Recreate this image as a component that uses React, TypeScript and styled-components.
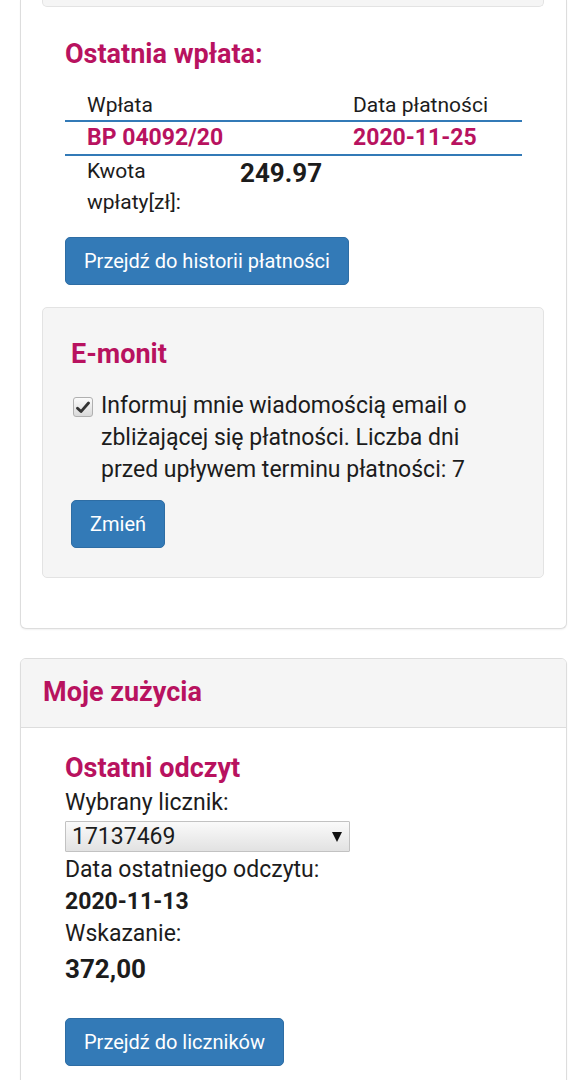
import React from "react";
import styled, { createGlobalStyle } from "styled-components";

const pink = "#b8125f";
const blue = "#337ab7";

const Global = createGlobalStyle`
  html, body { margin: 0; padding: 0; background: #fff; }
  body {
    font-family: Roboto, "Noto Sans", "Liberation Sans", sans-serif;
    color: #1c1c1c;
    font-size: 23px;
    line-height: 32px;
  }
  * { box-sizing: border-box; }
`;

const Page = styled.div`
  padding: 0 18px 0 20px;
  display: flex;
  flex-direction: column;
  gap: 29px;
`;

const Panel = styled.section<{ $cutTop?: boolean }>`
  border: 1px solid #ddd;
  border-top: ${(p) => (p.$cutTop ? "none" : "1px solid #ddd")};
  border-radius: ${(p) => (p.$cutTop ? "0 0 6px 6px" : "6px")};
  background: #fff;
  box-shadow: 0 1px 2px rgba(0, 0, 0, 0.06);
  overflow: hidden;
`;

const PanelHeading = styled.header`
  background: #f5f5f5;
  border-bottom: 1px solid #ddd;
  padding: 19px 22px 20px;
`;

const PanelTitle = styled.h2`
  margin: 0;
  font-size: 27px;
  line-height: 29px;
  font-weight: 700;
  color: ${pink};
`;

const PanelBody = styled.div<{ $pt?: number; $pb?: number }>`
  padding: ${(p) => p.$pt ?? 0}px 22px ${(p) => p.$pb ?? 22}px;
`;

const Well = styled.div<{ $tail?: boolean }>`
  background: #f5f5f5;
  border: 1px solid #e3e3e3;
  border-radius: 5px;
  ${(p) =>
    p.$tail
      ? `height: 7px; border-top: none; border-radius: 0 0 5px 5px; margin-left: -1px;`
      : `padding: 30px 28px 29px; margin: 22px 0 29px -1px;`}
`;

const Col = styled.div`
  padding: 0 22px;
`;

const Heading = styled.h3<{ $mt?: number; $mb?: number }>`
  margin: ${(p) => p.$mt ?? 0}px 0 ${(p) => p.$mb ?? 0}px;
  font-size: 27px;
  line-height: 27.5px;
  font-weight: 700;
  color: ${pink};
`;

const Table = styled.table`
  width: 100%;
  border-collapse: collapse;
  font-size: 21px;
`;

const Th = styled.th<{ $w?: number }>`
  text-align: left;
  font-weight: 400;
  line-height: 28px;
  padding: 0 22px 1px;
  border-bottom: 2px solid ${blue};
  width: ${(p) => (p.$w ? `${p.$w}px` : "auto")};
`;

const Td = styled.td`
  text-align: left;
  font-weight: 700;
  font-size: 23px;
  line-height: 32px;
  color: ${pink};
  padding: 0 22px;
  border-bottom: 2px solid ${blue};
`;

const AmountRow = styled.div`
  display: grid;
  grid-template-columns: 153px 1fr;
  margin-bottom: 19px;
`;

const AmountLabel = styled.div`
  padding: 0 22px;
  font-size: 21px;
  line-height: 31px;
`;

const AmountValue = styled.div`
  padding: 0 22px;
  font-size: 26px;
  font-weight: 700;
  line-height: 31px;
  margin-top: 2px;
`;

const Button = styled.button`
  display: inline-block;
  font-family: inherit;
  font-size: 20px;
  line-height: 28px;
  padding: 9px 18px;
  color: #fff;
  background: ${blue};
  border: 1px solid #2e6da4;
  border-radius: 5px;
  cursor: pointer;
`;

const CheckLine = styled.label`
  display: flex;
  align-items: flex-start;
  gap: 8px;
  margin: 22px 0 14px;
  padding-left: 2px;
`;

const CheckBox = styled.span`
  flex: none;
  width: 20px;
  height: 20px;
  margin-top: 7px;
  border: 1px solid #b0b0b0;
  border-radius: 3px;
  background: linear-gradient(#fbfbfb, #d9d9d9);
  display: flex;
  align-items: center;
  justify-content: center;
`;

const CheckText = styled.span`
  font-size: 23px;
  line-height: 32px;
`;

const Line = styled.div<{ $bold?: boolean; $size?: number; $lh?: number }>`
  font-size: ${(p) => p.$size ?? 23}px;
  line-height: ${(p) => p.$lh ?? 32}px;
  font-weight: ${(p) => (p.$bold ? 700 : 400)};
`;

const SelectWrap = styled.div`
  position: relative;
  width: 285px;
  margin: 2px 0 1px;
`;

const Select = styled.select`
  appearance: none;
  -webkit-appearance: none;
  width: 100%;
  height: 31px;
  font-family: inherit;
  font-size: 23px;
  line-height: 29px;
  color: #1c1c1c;
  padding: 0 30px 0 6px;
  border: 1px solid #c2c2c2;
  border-radius: 1px;
  background: linear-gradient(#fafafa, #e2e2e2);
`;

const Arrow = styled.span`
  position: absolute;
  right: 8px;
  top: 11px;
  width: 0;
  height: 0;
  border-left: 5px solid transparent;
  border-right: 5px solid transparent;
  border-top: 10px solid #111;
  pointer-events: none;
`;

const ButtonRow = styled.div`
  margin-top: 30px;
`;

export default function App() {
  return (
    <>
      <Global />
      <Page>
        <Panel $cutTop>
          <PanelBody $pb={21}>
            <Well $tail />
            <Col>
              <Heading $mt={34} $mb={22}>Ostatnia wpłata:</Heading>
              <Table>
                <thead>
                  <tr>
                    <Th $w={266}>Wpłata</Th>
                    <Th>Data płatności</Th>
                  </tr>
                </thead>
                <tbody>
                  <tr>
                    <Td>BP 04092/20</Td>
                    <Td>2020-11-25</Td>
                  </tr>
                </tbody>
              </Table>
              <AmountRow>
                <AmountLabel>Kwota wpłaty[zł]:</AmountLabel>
                <AmountValue>249.97</AmountValue>
              </AmountRow>
              <Button type="button">Przejdź do historii płatności</Button>
            </Col>
            <Well>
              <Heading $mt={3}>E-monit</Heading>
              <CheckLine>
                <CheckBox>
                  <svg width="14" height="13" viewBox="0 0 14 13">
                    <path
                      d="M1.5 7.2 L5 10.6 L12.5 2"
                      fill="none"
                      stroke="#333"
                      strokeWidth="2.8"
                      strokeLinecap="round"
                      strokeLinejoin="round"
                    />
                  </svg>
                </CheckBox>
                <CheckText>
                  Informuj mnie wiadomością email o zbliżającej się płatności. Liczba dni przed upływem terminu
                  płatności: 7
                </CheckText>
              </CheckLine>
              <Button type="button">Zmień</Button>
            </Well>
          </PanelBody>
        </Panel>

        <Panel>
          <PanelHeading>
            <PanelTitle>Moje zużycia</PanelTitle>
          </PanelHeading>
          <PanelBody $pt={27}>
            <Col>
              <Heading $mb={4}>Ostatni odczyt</Heading>
              <Line>Wybrany licznik:</Line>
              <SelectWrap>
                <Select defaultValue="17137469">
                  <option value="17137469">17137469</option>
                </Select>
                <Arrow />
              </SelectWrap>
              <Line>Data ostatniego odczytu:</Line>
              <Line $bold>2020-11-13</Line>
              <Line>Wskazanie:</Line>
              <Line $bold $size={26} $lh={38}>
                372,00
              </Line>
              <ButtonRow>
                <Button type="button">Przejdź do liczników</Button>
              </ButtonRow>
            </Col>
          </PanelBody>
        </Panel>
      </Page>
    </>
  );
}
